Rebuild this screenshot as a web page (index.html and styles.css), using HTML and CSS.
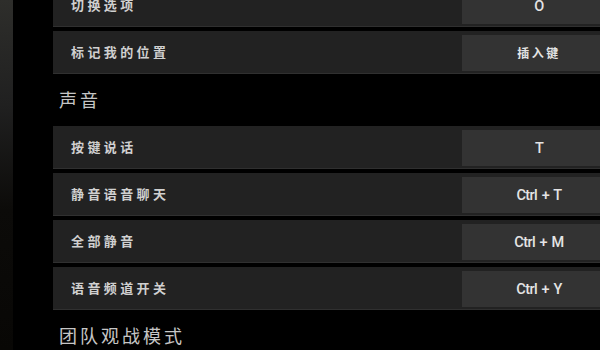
FILE: index.html
```html
<!DOCTYPE html>
<html lang="zh-CN">
<head>
<meta charset="utf-8">
<title>按键设置</title>
<link rel="stylesheet" href="styles.css">
</head>
<body>
<div class="screen">
  <div class="edge"></div>
  <div class="panel">
    <div class="row"><div class="label">切换选项</div><div class="key">O</div></div>
    <div class="row"><div class="label">标记我的位置</div><div class="key cjk">插入键</div></div>
    <div class="heading">声音</div>
    <div class="row"><div class="label">按键说话</div><div class="key">T</div></div>
    <div class="row"><div class="label">静音语音聊天</div><div class="key">Ctrl + T</div></div>
    <div class="row"><div class="label">全部静音</div><div class="key">Ctrl + M</div></div>
    <div class="row"><div class="label">语音频道开关</div><div class="key">Ctrl + Y</div></div>
    <div class="heading">团队观战模式</div>
  </div>
</div>
</body>
</html>
```
FILE: styles.css
```css
html, body {
  margin: 0;
  padding: 0;
  background: #000;
  width: 600px;
  height: 350px;
  overflow: hidden;
}
.screen {
  display: flex;
  align-items: flex-start;
  width: 600px;
  height: 350px;
  overflow: hidden;
  font-family: "Noto Sans CJK SC", "Noto Sans", sans-serif;
}
.edge {
  flex: 0 0 13px;
  align-self: stretch;
  margin-right: 40px;
  background: linear-gradient(to bottom, #2e2e2b 0%, #202020 30%, #0c0b09 60%, #080705 100%);
}
.panel {
  flex: 0 0 570px;
  display: flex;
  flex-direction: column;
  margin-top: -16px;
}
.row {
  box-sizing: border-box;
  flex: 0 0 43px;
  height: 43px;
  margin-bottom: 4px;
  display: flex;
  padding: 4px 0 2px 0;
  background: #222222;
  border-bottom: 1px solid #303030;
}
.row:has(+ .heading) { margin-bottom: 0; }
.label {
  flex: 1;
  display: flex;
  align-items: center;
  padding-left: 18px;
  padding-bottom: 4px;
  font-size: 13px;
  font-weight: 700;
  letter-spacing: 3.4px;
  color: #d0d0d0;
}
.key {
  flex: 0 0 154px;
  margin-right: 7px;
  display: flex;
  align-items: center;
  justify-content: center;
  background: #333333;
  font-family: "Roboto", "Liberation Sans", sans-serif;
  font-size: 14.5px;
  font-weight: 500;
  letter-spacing: -0.6px;
  word-spacing: 1.5px;
  color: #e4e4e4;
}
.key.cjk {
  font-family: "Noto Sans CJK SC", sans-serif;
  font-size: 12px;
  font-weight: 700;
  letter-spacing: 2.5px;
  padding-bottom: 2px;
}
.heading {
  flex: 0 0 52px;
  height: 52px;
  display: flex;
  align-items: center;
  padding-left: 6px;
  padding-bottom: 2px;
  box-sizing: border-box;
  font-size: 18px;
  letter-spacing: 3px;
  color: #c6c6c6;
}
```
